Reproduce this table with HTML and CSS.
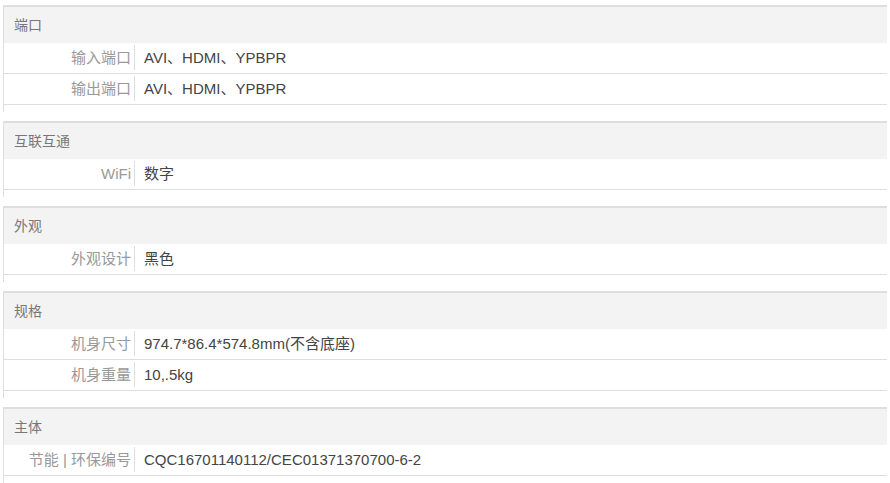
FILE: index.html
```html
<!DOCTYPE html>
<html lang="zh-CN">
<head>
<meta charset="utf-8">
<title>参数</title>
<link rel="stylesheet" href="styles.css">
</head>
<body>
<div class="specs">
  <section class="group">
    <h3 class="group-title">端口</h3>
    <div class="row"><div class="label">输入端口</div><div class="value">AVI、HDMI、YPBPR</div></div>
    <div class="row"><div class="label">输出端口</div><div class="value">AVI、HDMI、YPBPR</div></div>
  </section>
  <section class="group">
    <h3 class="group-title">互联互通</h3>
    <div class="row"><div class="label">WiFi</div><div class="value">数字</div></div>
  </section>
  <section class="group">
    <h3 class="group-title">外观</h3>
    <div class="row"><div class="label">外观设计</div><div class="value">黑色</div></div>
  </section>
  <section class="group">
    <h3 class="group-title">规格</h3>
    <div class="row"><div class="label">机身尺寸</div><div class="value">974.7*86.4*574.8mm(不含底座)</div></div>
    <div class="row"><div class="label">机身重量</div><div class="value">10,.5kg</div></div>
  </section>
  <section class="group">
    <h3 class="group-title">主体</h3>
    <div class="row"><div class="label">节能 | 环保编号</div><div class="value">CQC16701140112/CEC01371370700-6-2</div></div>
  </section>
</div>
</body>
</html>
```

FILE: styles.css
```css
html, body {
  margin: 0;
  padding: 0;
  background: #fff;
}
body {
  font-family: "Liberation Sans", Arial, "Noto Sans CJK SC", sans-serif;
  font-size: 15px;
  color: #444;
}
.specs {
  padding: 5px 3px 0 3px;
}
.group {
  border-top: 2px solid #dedede;
  border-left: 1px solid #dedede;
  padding-bottom: 7px;
  margin-bottom: 9px;
}
.group-title {
  margin: 0;
  height: 36px;
  line-height: 36px;
  padding-left: 10px;
  background: #f3f3f3;
  font-size: 14px;
  font-weight: normal;
  color: #777;
}
.row {
  display: flex;
  height: 30px;
  border-bottom: 1px solid #dedede;
}
.label {
  width: 127px;
  flex: none;
  text-align: right;
  padding-right: 3px;
  margin: 2px 0 3px;
  border-right: 1px solid #dedede;
  line-height: 25px;
  color: #999;
}
.value {
  padding-left: 9px;
  line-height: 30px;
  color: #444;
}
```
